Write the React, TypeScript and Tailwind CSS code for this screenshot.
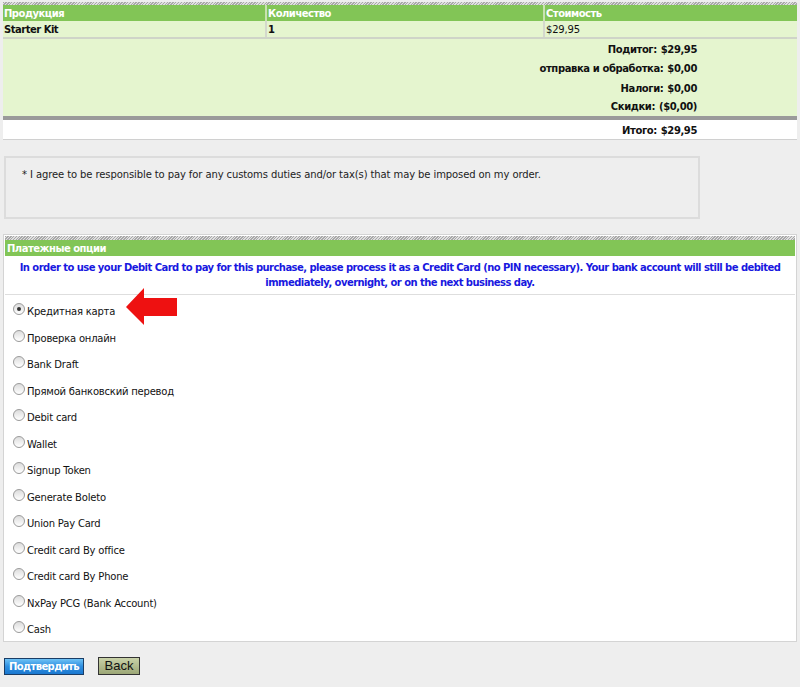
import React from 'react';

const hatch = 'bg-[repeating-linear-gradient(135deg,#a8a8a8_0px,#a8a8a8_1px,#e0e0e0_1px,#e0e0e0_2px)]';

const OPTIONS = [
  'Кредитная карта',
  'Проверка онлайн',
  'Bank Draft',
  'Прямой банковский перевод',
  'Debit card',
  'Wallet',
  'Signup Token',
  'Generate Boleto',
  'Union Pay Card',
  'Credit card By office',
  'Credit card By Phone',
  'NxPay PCG (Bank Account)',
  'Cash',
];

const TOTALS = [
  ['Подитог:', '$29,95'],
  ['отправка и обработка:', '$0,00'],
  ['Налоги:', '$0,00'],
  ['Скидки:', '($0,00)'],
];

function Radio({ checked }: { checked?: boolean }) {
  return (
    <span className="mt-[-3px] flex h-[12px] w-[12px] shrink-0 items-center justify-center rounded-full border border-[#9a9a9a] bg-[linear-gradient(#dcdcdc,#ffffff)]">
      {checked && <span className="h-[4px] w-[4px] rounded-full bg-[#333]" />}
    </span>
  );
}

export default function App() {
  return (
    <div className="min-h-[687px] bg-[#eeeeee] pt-[2px] font-['DejaVu_Sans',Verdana,sans-serif] text-[10px] tracking-[-0.2px] text-[#111]">
      {/* order table */}
      <div className="ml-[3px] w-[794px] border-b border-[#d0d0d0]">
        <div className={`h-[3px] ${hatch}`} />
        <div className="flex h-[16px] items-center bg-[#82c556] font-bold tracking-[-0.5px] text-white">
          <div className="w-[262px] pl-[1px]">Продукция</div>
          <div className="h-full w-[2px] bg-[#c8e2b0]" />
          <div className="w-[276px] pl-[1px]">Количество</div>
          <div className="h-full w-[2px] bg-[#c8e2b0]" />
          <div className="flex-1 pl-[1px]">Стоимость</div>
        </div>
        <div className="flex h-[18px] items-center border-b-2 border-[#cfd4c8] bg-[#e5f5cf] font-bold tracking-[-0.5px]">
          <div className="w-[262px] pl-[1px]">Starter Kit</div>
          <div className="h-full w-[2px] bg-[#d4d8cc]" />
          <div className="w-[276px] pl-[1px]">1</div>
          <div className="h-full w-[2px] bg-[#d4d8cc]" />
          <div className="flex-1 pl-[1px] font-normal tracking-[-0.2px]">$29,95</div>
        </div>
        <div className="flex h-[77px] flex-col items-end bg-[#e5f5cf] pr-[100px] pt-[1px] font-semibold tracking-[-0.4px]">
          {TOTALS.map(([k, v], i) => (
            <div key={k} className={`flex h-[20px] items-center gap-[4px] ${i === 3 ? 'mt-[-1px]' : ''}`}>
              <span>{k}</span>
              <span>{v}</span>
            </div>
          ))}
        </div>
        <div className="h-[4px] bg-[#9a9a9a]" />
        <div className="flex h-[19px] items-center justify-end bg-white pr-[100px] pt-[1px] font-semibold tracking-[-0.4px]">
          <span>Итого:</span>
          <span className="ml-[4px]">$29,95</span>
        </div>
      </div>

      {/* customs note */}
      <div className="ml-[4px] mt-[16px] h-[63px] w-[696px] border-2 border-[#dcdcdc] bg-[#eeeeee] pl-[16px] pt-[9px] tracking-[-0.1px] text-[#222]">
        * I agree to be responsible to pay for any customs duties and/or tax(s) that may be imposed on my order.
      </div>

      {/* payment options */}
      <div className="relative ml-[3px] mt-[15px] w-[794px] border border-[#d4d4d4] bg-white px-[1px] pb-[5px] pt-[1px]">
        <div className={`h-[4px] ${hatch}`} />
        <div className="flex h-[16px] items-center bg-[#82c556] pl-[2px] font-bold tracking-[-0.5px] text-white">Платежные опции</div>
        <div className="border-b border-[#dedede] px-[10px] pb-[4px] pt-[4px] text-center font-bold leading-[15px] tracking-[-0.55px] text-[#1818e0]">
          In order to use your Debit Card to pay for this purchase, please process it as a Credit Card (no PIN necessary). Your bank account will still be debited immediately, overnight, or on the next business day.
        </div>
        <div className="flex flex-col gap-[14.5px] pl-[8px] pt-[11px]">
          {OPTIONS.map((o, i) => (
            <div key={o} className="flex h-[12px] items-start gap-[2px]">
              <Radio checked={i === 0} />
              <span className="leading-[12px]">{o}</span>
            </div>
          ))}
        </div>
        {/* red pointer arrow */}
        <svg width="54" height="40" viewBox="0 0 54 40" className="absolute left-[121px] top-[52px]">
          <polygon points="1,20 19,1 19,11 52,11 52,29 19,29 19,38" fill="#ee1111" />
        </svg>
      </div>

      {/* buttons */}
      <div className="ml-[4px] mt-[15px] flex items-center gap-[14px]">
        <button className="h-[17px] w-[80px] border border-[#1a3d66] bg-[linear-gradient(#6ec2f5,#2e8ee0_50%,#1a78d0)] font-bold tracking-[-0.6px] text-white">
          Подтвердить
        </button>
        <button className="h-[18px] w-[42px] border border-[#333] bg-[linear-gradient(#c9d2a8,#9ca777)] font-['Liberation_Sans',Arial,sans-serif] text-[13px] leading-[14px] tracking-normal text-[#111]">
          Back
        </button>
      </div>
    </div>
  );
}
